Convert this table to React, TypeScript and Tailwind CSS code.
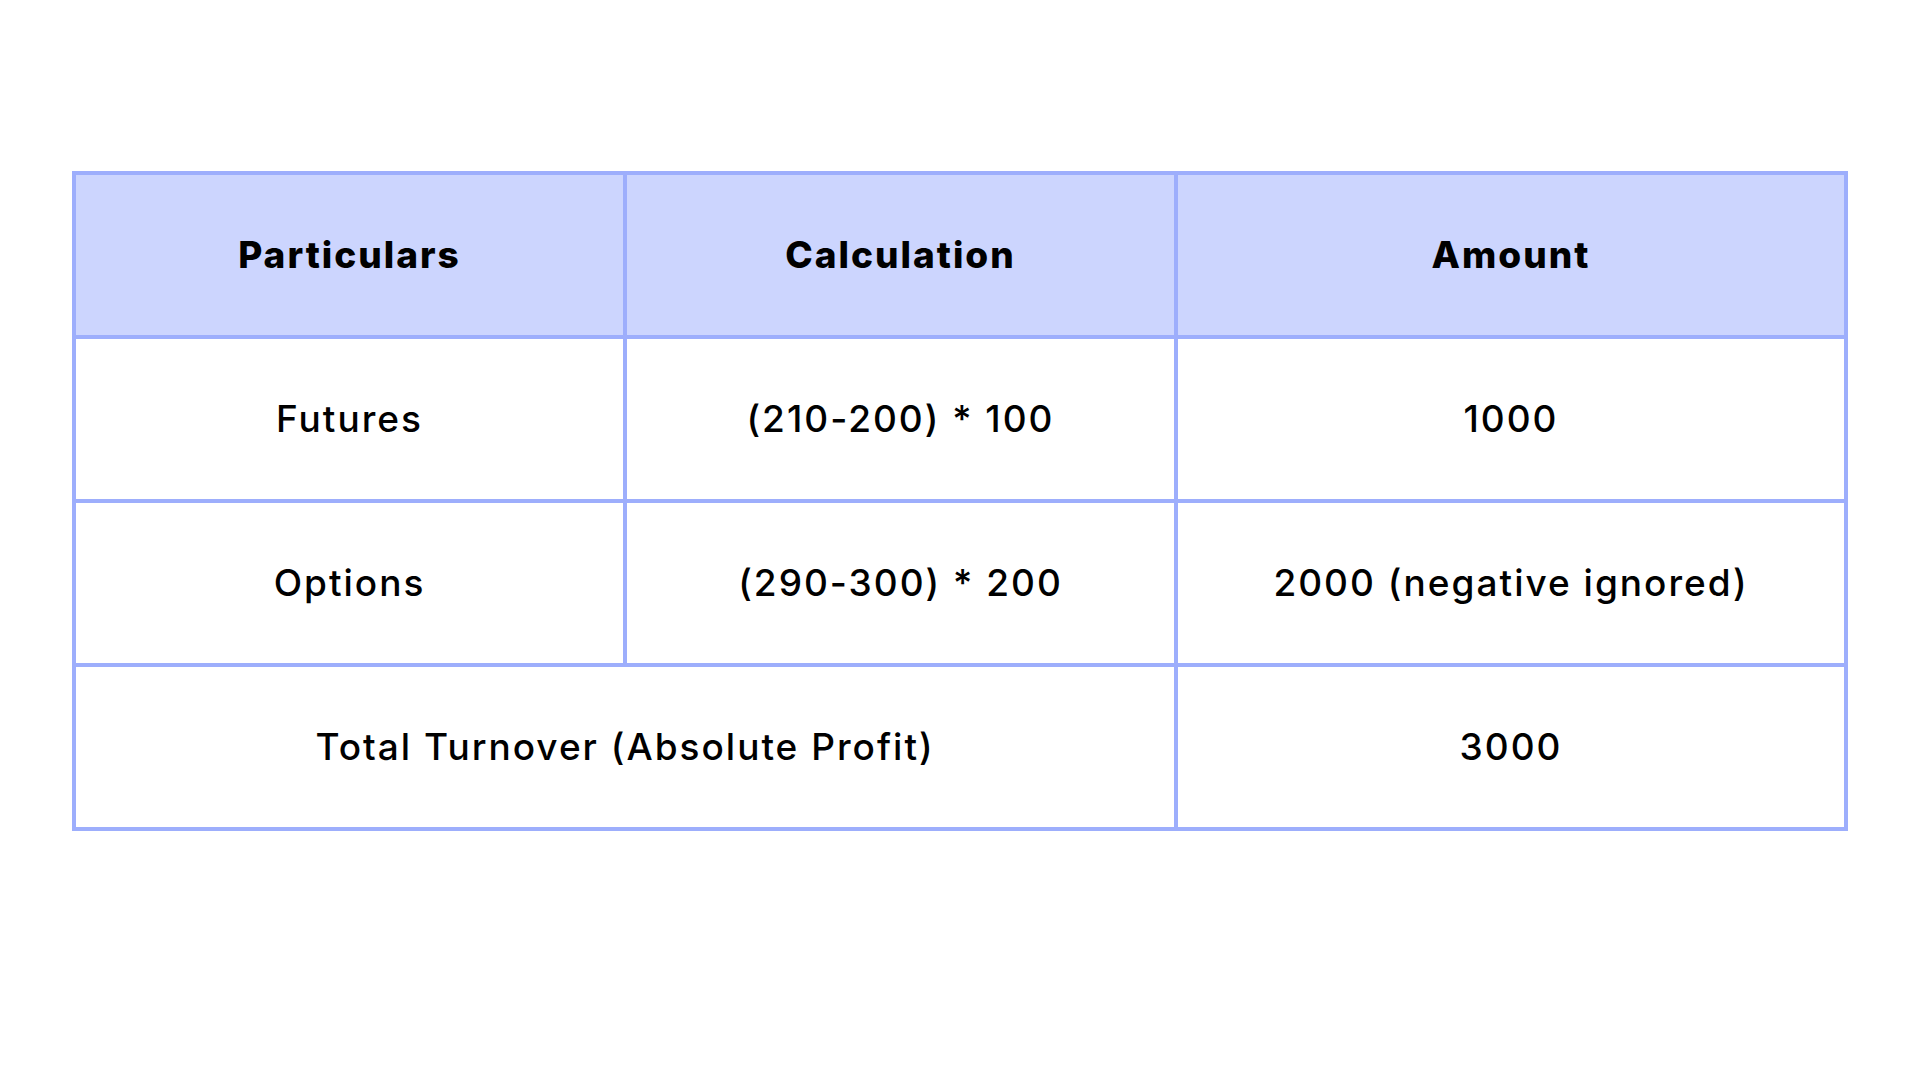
import React from "react";

const cell = "bg-white flex items-center justify-center text-[37px] font-medium tracking-[2px] text-black";
const head = "bg-[#ccd5fe] flex items-center justify-center text-[37px] font-extrabold tracking-[2px] text-black";

export default function App() {
  return (
    <div className="w-[1920px] h-[1080px] bg-white pt-[171px] pl-[72px]" style={{ fontFamily: "Inter, 'Noto Sans', sans-serif" }}>
      <div className="w-[1776px] grid grid-cols-[547px_547px_666px] auto-rows-[160px] gap-[4px] p-[4px] bg-[#9daefc]">
        <div className={head}>Particulars</div>
        <div className={head}>Calculation</div>
        <div className={head}>Amount</div>
        <div className={cell}>Futures</div>
        <div className={cell}>(210-200) * 100</div>
        <div className={cell}>1000</div>
        <div className={cell}>Options</div>
        <div className={cell}>(290-300) * 200</div>
        <div className={cell}>2000 (negative ignored)</div>
        <div className={`${cell} col-span-2`}>Total Turnover (Absolute Profit)</div>
        <div className={cell}>3000</div>
      </div>
    </div>
  );
}
